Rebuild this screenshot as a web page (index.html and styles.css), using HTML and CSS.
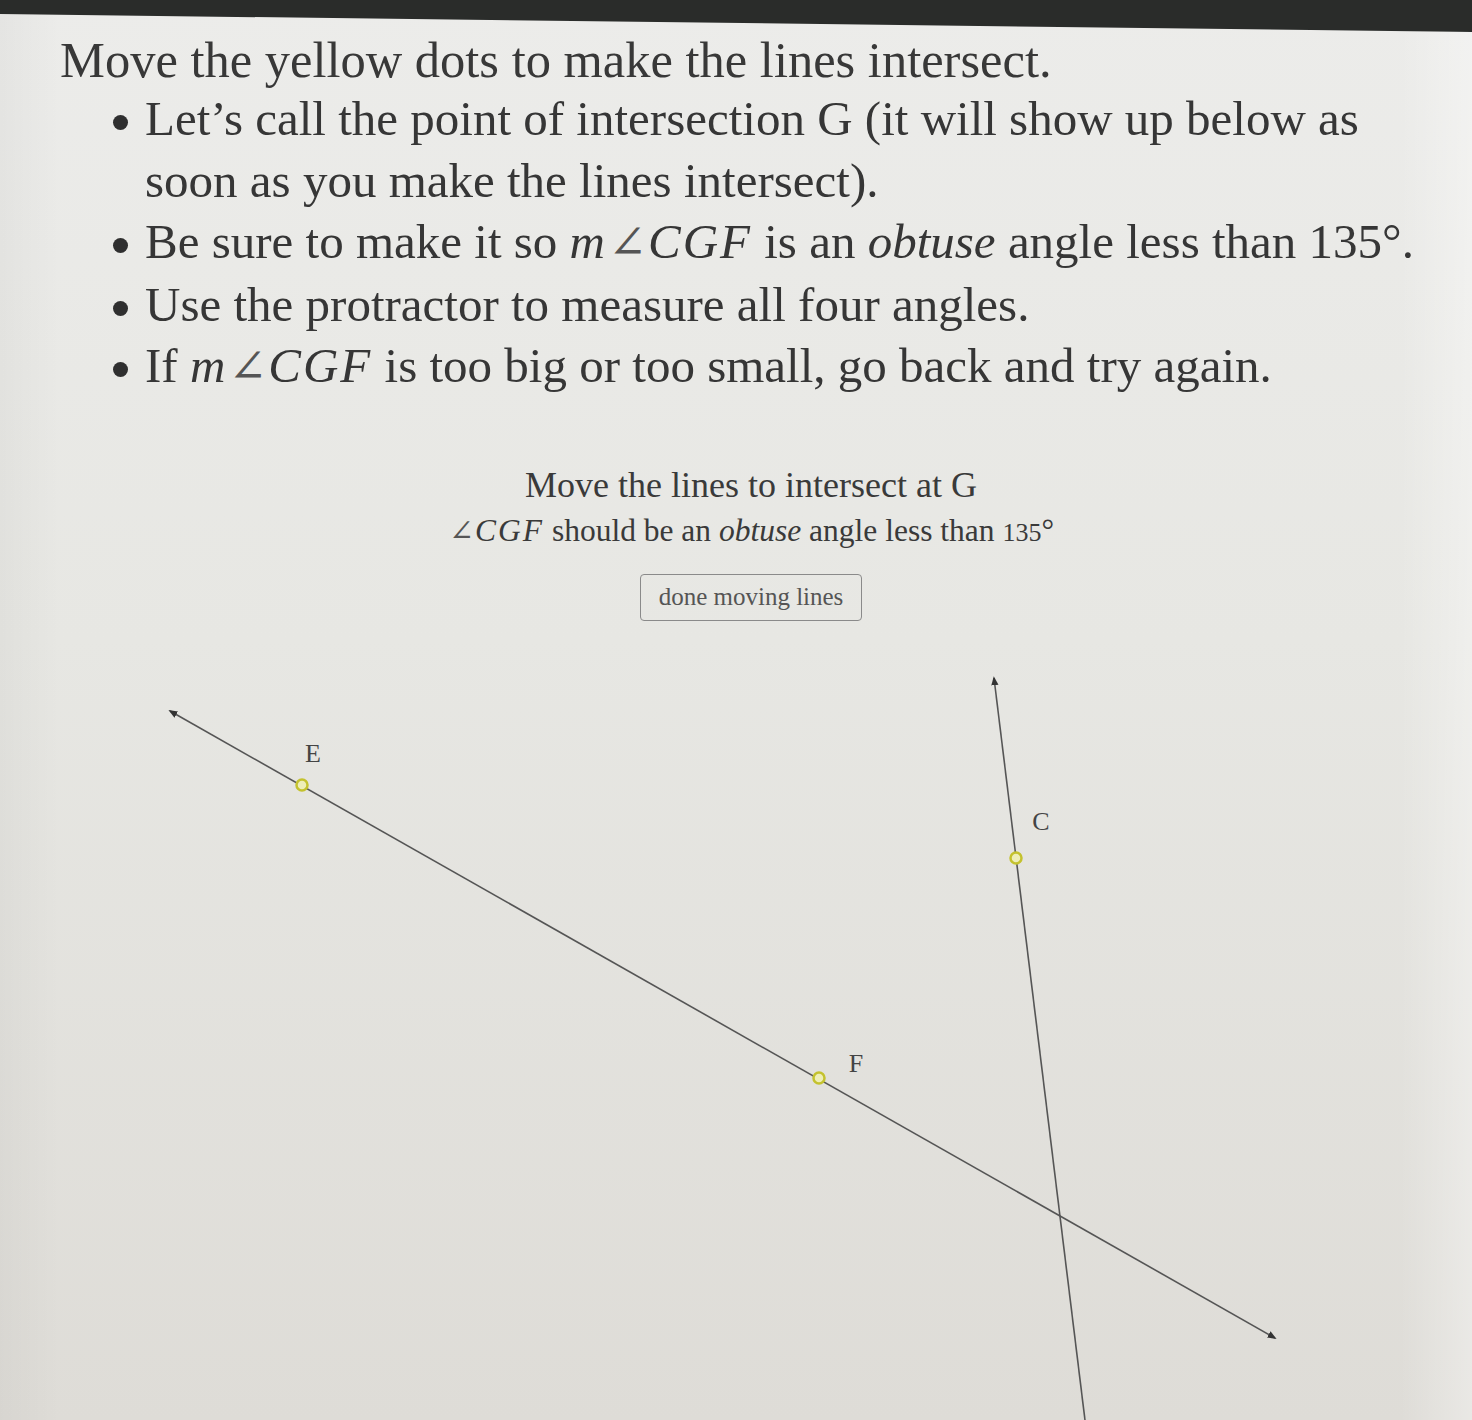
FILE: index.html
```html
<!DOCTYPE html>
<html>
<head>
<meta charset="utf-8">
<link rel="stylesheet" href="styles.css">
</head>
<body>
<div class="screen">
  <h1 class="title">Move the yellow dots to make the lines intersect.</h1>
  <ul class="steps">
    <li>Let’s call the point of intersection G (it will show up below as soon as you make the lines intersect).</li>
    <li>Be sure to make it so <span class="math"><i>m</i><span class="ang">∠</span><i>CGF</i></span> is an <i>obtuse</i> angle less than 135°.</li>
    <li>Use the protractor to measure all four angles.</li>
    <li>If <span class="math"><i>m</i><span class="ang">∠</span><i>CGF</i></span> is too big or too small, go back and try again.</li>
  </ul>
  <div class="task">
    <p class="task-line">Move the lines to intersect at G</p>
    <p class="task-line small"><span class="math"><span class="ang">∠</span><i>CGF</i></span> should be an <i>obtuse</i> angle less than <span class="oldstyle">135</span>°</p>
    <button class="done">done moving lines</button>
  </div>
  <svg class="canvas" width="1472" height="790" viewBox="0 0 1472 790">
    <defs>
      <marker id="arr" viewBox="0 0 10 10" refX="8" refY="5" markerWidth="9" markerHeight="9" markerUnits="userSpaceOnUse" orient="auto-start-reverse">
        <path d="M0,1 L10,5 L0,9 z" fill="#333"/>
      </marker>
    </defs>
    <line x1="170" y1="70" x2="1275" y2="697" stroke="#555" stroke-width="1.6" marker-start="url(#arr)" marker-end="url(#arr)"/>
    <line x1="994" y1="37" x2="1090" y2="820" stroke="#555" stroke-width="1.6" marker-start="url(#arr)"/>
    <circle cx="302" cy="144" r="5.5" class="pt"/>
    <circle cx="819" cy="437" r="5.5" class="pt"/>
    <circle cx="1016" cy="217" r="5.5" class="pt"/>
    <text x="313" y="121" class="lbl">E</text>
    <text x="856" y="431" class="lbl">F</text>
    <text x="1041" y="189" class="lbl">C</text>
  </svg>
</div>
</body>
</html>
```
FILE: styles.css
```css
html, body {
  margin: 0;
  padding: 0;
  background: #2a2c2a;
}
body {
  width: 1472px;
  height: 1420px;
  overflow: hidden;
  font-family: "Liberation Serif", "Times New Roman", serif;
  color: #363636;
}
.screen {
  height: 1420px;
  background:
    linear-gradient(90deg, rgba(0,0,0,0.03) 0px, rgba(0,0,0,0) 60px, rgba(255,255,255,0) 1400px, rgba(255,255,255,0.35) 1472px),
    linear-gradient(180deg, #ececea 0%, #e7e7e3 45%, #dedcd7 100%);
  clip-path: polygon(0 14px, 100% 32px, 100% 100%, 0 100%);
  padding-top: 32px;
  box-sizing: border-box;
}
.title {
  margin: 0 0 0 60px;
  font-weight: normal;
  font-size: 50.5px;
  line-height: 56px;
  color: #383838;
}
.steps {
  list-style: none;
  margin: 0;
  padding: 0 0 0 145px;
  width: 1290px;
  font-size: 49px;
  line-height: 61.5px;
}
.steps li {
  position: relative;
}
.steps li::before {
  content: "";
  position: absolute;
  left: -32px;
  top: 27px;
  width: 15px;
  height: 15px;
  border-radius: 50%;
  background: #2f2f2f;
}
.math i {
  font-style: italic;
  letter-spacing: 2px;
}
.ang {
  font-family: "DejaVu Serif", serif;
  font-weight: 200;
  font-size: 0.95em;
  color: #555;
  padding: 0 1px;
}
.task {
  margin-top: 64px;
  padding-left: 30px;
  display: flex;
  flex-direction: column;
  align-items: center;
}
.task-line {
  margin: 0;
  font-size: 36px;
  line-height: 46px;
  color: #3a3a3a;
}
.task-line.small {
  font-size: 31.5px;
  line-height: 46px;
}
.oldstyle {
  font-size: 26px;
}
.done {
  margin-top: 18px;
  width: 222px;
  height: 47px;
  border: 1.5px solid #8a8a8a;
  border-radius: 4px;
  background: transparent;
  font-family: "Liberation Serif", "Times New Roman", serif;
  font-size: 25px;
  color: #555;
  padding: 0;
}
.canvas {
  display: block;
  margin-top: 20px;
}
.pt {
  fill: #eeeeb8;
  stroke: #c4c22e;
  stroke-width: 2.5;
}
.lbl {
  font-family: "Liberation Serif", "Times New Roman", serif;
  font-size: 26px;
  fill: #444;
  text-anchor: middle;
}
```
